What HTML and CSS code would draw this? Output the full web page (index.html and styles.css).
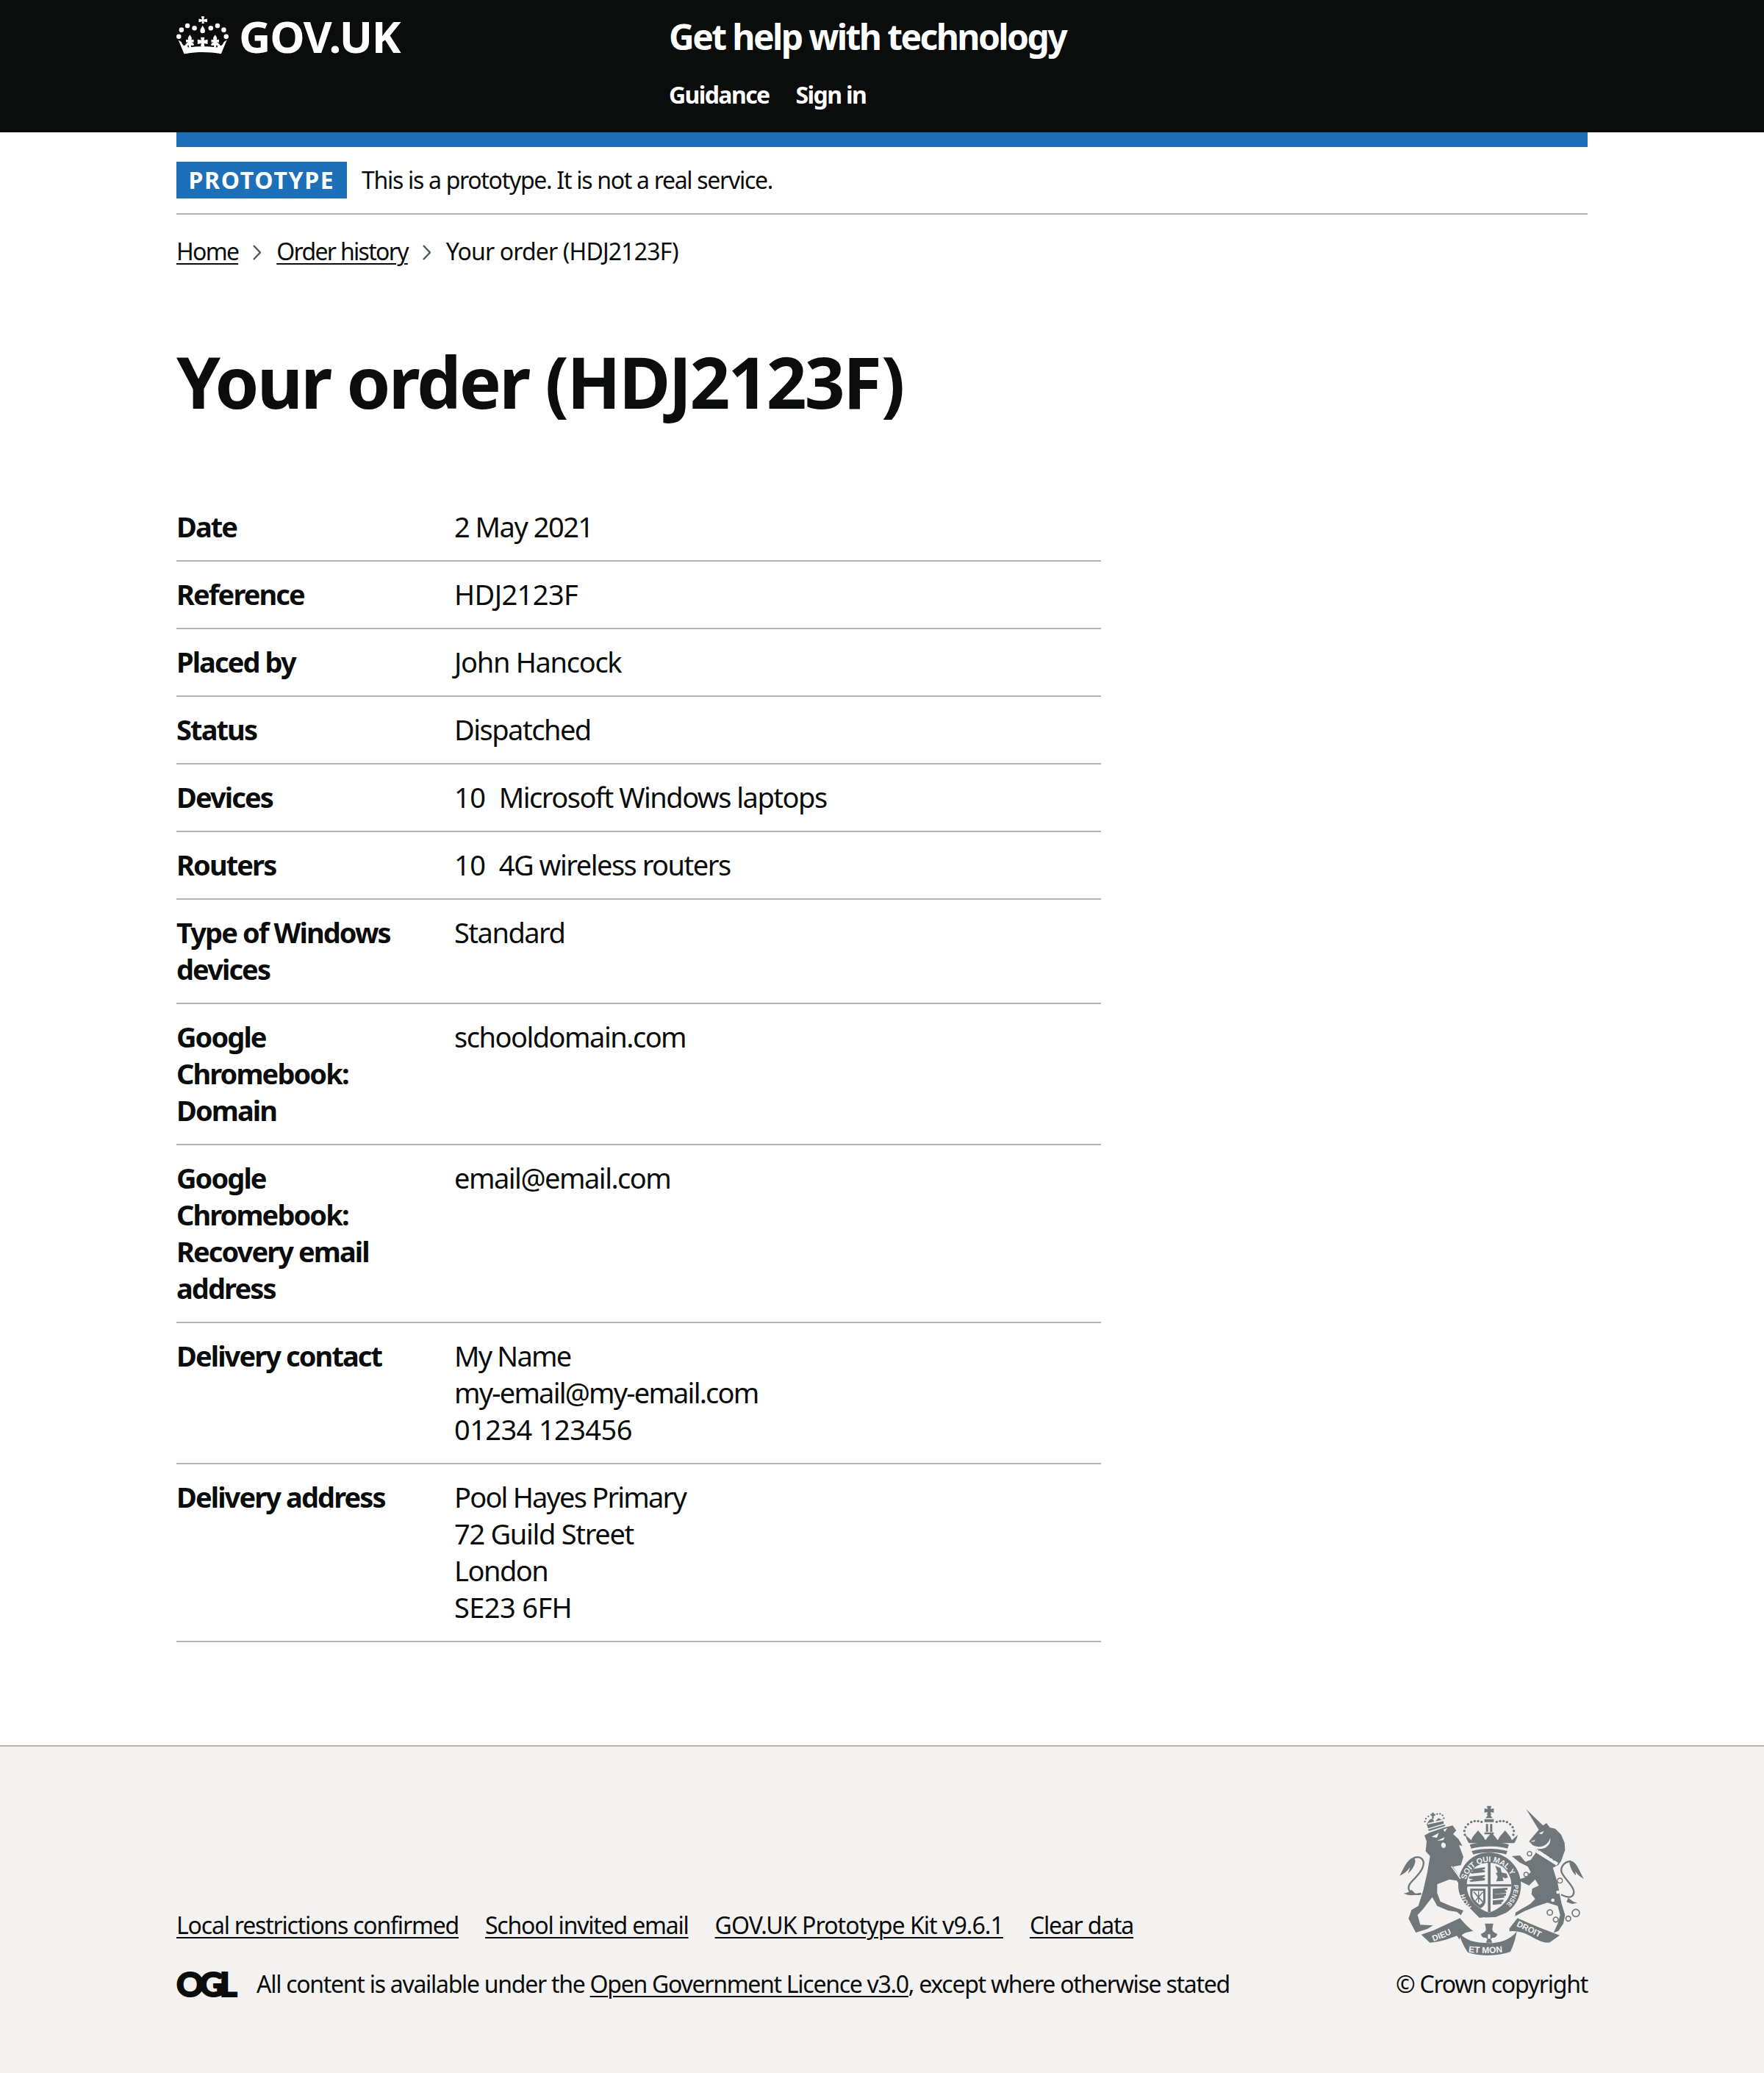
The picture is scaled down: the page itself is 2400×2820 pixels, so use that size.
FILE: index.html
```html
<!DOCTYPE html>
<html lang="en">
<head>
<meta charset="utf-8">
<title>Your order (HDJ2123F)</title>
<link rel="stylesheet" href="styles.css">
</head>
<body>
<header class="header">
  <div class="container header-inner">
    <a class="logo" href="#">
      <svg class="crown" viewBox="45 30 218 162" aria-hidden="true">
        <g fill="#fff">
          <circle cx="54" cy="118" r="10"/><circle cx="65" cy="90" r="10"/><circle cx="90" cy="73" r="10"/><circle cx="119" cy="83" r="10"/>
          <circle cx="187" cy="83" r="10"/><circle cx="215" cy="73" r="10"/><circle cx="241" cy="90" r="10"/><circle cx="251" cy="118" r="10"/>
          <path d="M147 34h13l-2 13 14-3v14l-14-3 2 9h-11l2-9-14 3V44l14 3z"/>
          <path d="M153 72c6 10 10 16 10 22a10 10 0 0 1-20 0c0-6 4-12 10-22z"/>
          <path d="M100 110c4 7 8 10 8 16 0 3-2 5-4 6l12-2v12l-10-2c3 2 9 4 12 13-5 3-9 3-13 1l-1 10h-8l-1-10c-4 2-8 2-13-1 3-9 9-11 12-13l-10 2v-12l12 2c-2-1-4-3-4-6 0-6 4-9 8-16z"/>
          <path d="M205 110c4 7 8 10 8 16 0 3-2 5-4 6l12-2v12l-10-2c3 2 9 4 12 13-5 3-9 3-13 1l-1 10h-8l-1-10c-4 2-8 2-13-1 3-9 9-11 12-13l-10 2v-12l12 2c-2-1-4-3-4-6 0-6 4-9 8-16z"/>
          <path d="M145 121h16l-2 12 15-3v19l-15-3 2 14h-16l2-14-15 3v-19l15 3z"/>
          <path d="M52 132l13 9c2 4 3 10 8 13 6 3 11 0 10-7 7 8 9 12 9 16 20-3 41-4 61-4s41 1 61 4c0-4 2-8 9-16-1 7 4 10 10 7 5-3 6-9 8-13l13-9-24 58c-25-5-51-7-77-7s-52 2-77 7z"/>
        </g>
      </svg>
      <span class="wordmark">GOV.UK</span>
    </a>
    <div class="service">
      <a class="service-name" href="#">Get help with technology</a>
      <nav class="nav">
        <a href="#">Guidance</a>
        <a href="#">Sign in</a>
      </nav>
    </div>
  </div>
</header>
<div class="container">
  <div class="blue-bar"></div>
  <div class="phase">
    <strong class="tag">PROTOTYPE</strong>
    <span>This is a prototype. It is not a real service.</span>
  </div>
  <nav class="crumbs">
    <a href="#">Home</a>
    <svg class="chev" viewBox="0 0 11 21"><path d="M1 1l9 9.5-9 9.5" fill="none" stroke="#505a5f" stroke-width="2.5"/></svg>
    <a href="#">Order history</a>
    <svg class="chev" viewBox="0 0 11 21"><path d="M1 1l9 9.5-9 9.5" fill="none" stroke="#505a5f" stroke-width="2.5"/></svg>
    <span class="crumb-current">Your order (HDJ2123F)</span>
  </nav>
  <main class="main">
    <h1 class="title">Your order (HDJ2123F)</h1>
    <dl class="summary">
      <div class="row"><dt>Date</dt><dd>2 May 2021</dd></div>
      <div class="row"><dt>Reference</dt><dd class="figures">HDJ2123F</dd></div>
      <div class="row"><dt>Placed by</dt><dd class="name">John Hancock</dd></div>
      <div class="row"><dt>Status</dt><dd>Dispatched</dd></div>
      <div class="row"><dt>Devices</dt><dd><span class="figures">10&nbsp; </span>Microsoft Windows laptops</dd></div>
      <div class="row"><dt>Routers</dt><dd><span class="figures">10&nbsp; </span>4G wireless routers</dd></div>
      <div class="row"><dt>Type of Windows devices</dt><dd>Standard</dd></div>
      <div class="row"><dt>Google Chromebook: Domain</dt><dd>schooldomain.com</dd></div>
      <div class="row"><dt>Google Chromebook: Recovery email address</dt><dd>email@email.com</dd></div>
      <div class="row"><dt>Delivery contact</dt><dd><span class="tight">My Name<br>my-email@my-email.com</span><br><span class="figures">01234 123456</span></dd></div>
      <div class="row"><dt>Delivery address</dt><dd><span class="tight">Pool Hayes Primary</span><br><span class="name">72 Guild Street</span><br>London<br><span class="figures">SE23 6FH</span></dd></div>
    </dl>
  </main>
</div>
<footer class="footer">
  <div class="container footer-inner">
    <div class="meta">
      <ul class="links">
        <li><a href="#">Local restrictions confirmed</a></li>
        <li><a href="#">School invited email</a></li>
        <li class="kit"><a href="#">GOV.UK Prototype Kit v9.6.1</a></li>
        <li><a href="#">Clear data</a></li>
      </ul>
      <div class="licence">
        <span class="ogl">OGL</span>
        <span>All content is available under the <a href="#">Open Government Licence v3.0</a>, except where otherwise stated</span>
      </div>
    </div>
    <div class="copyright">
      <svg class="crest" viewBox="130 108 752 612" aria-hidden="true">
        <defs>
          <path id="garter-top" d="M402 412A98 98 0 0 1 592 412"/>
          <path id="garter-right" d="M598 432A100 100 0 0 1 562 516"/>
          <path id="garter-left" d="M426 522A104 104 0 0 1 395 458"/>
          <path id="rib-left" d="M270 663Q320 645 372 617"/>
          <path id="rib-mid" d="M412 706Q498 718 582 702"/>
          <path id="rib-right" d="M607 600Q670 630 732 662"/>
        </defs>
        <g fill="#6f777b">
          <g transform="translate(120 90)">
            <path d="M113 140L135 128 195 108 228 100 243 120 230 135 252 155 268 183 254 180 272 228 262 262 230 268 262 318 275 335 292 345 280 365 262 350 245 325 215 320 165 340 165 375 178 410 220 428 272 447 262 466 245 452 210 447 165 428 145 392 108 440 85 465 96 505 148 508 125 522 78 537 48 480 60 445 88 428 108 365 125 290 136 225 118 205 122 165Z"/>
            <path d="M100 378C60 388 32 362 60 330 90 300 116 270 108 245 100 225 75 225 62 238" fill="none" stroke="#6f777b" stroke-width="7"/>
            <path d="M70 230C45 235 30 270 12 305 30 296 42 288 54 270 52 282 48 290 46 296 62 282 76 260 76 242Z"/>
            <path d="M60 362C50 372 40 376 28 376 40 384 60 388 80 382Z"/>
            <path d="M122 95L134 76 146 72 155 86 170 70 190 78 192 92 128 112Z"/>
            <path d="M127 116L196 96 198 102 132 122Z"/>
            <path d="M144 47h7v6l6-1v9l-6-1v12h-7V60l-6 1v-9l6 1z"/>
            <circle cx="115" cy="84" r="3.5"/><circle cx="119" cy="72" r="3.5"/><circle cx="129" cy="63" r="3.5"/><circle cx="165" cy="53" r="3.5"/><circle cx="177" cy="52" r="3.5"/><circle cx="187" cy="58" r="3.5"/><circle cx="192" cy="70" r="3.5"/>
          </g>
          <path d="M488 110h18l-3 13 13-3v18l-13-3 3 12h-18l3-12-13 3v-18l13 3z"/>
          <path d="M497 140l14 20h-28z"/>
          <path d="M478 164h38v12h-38zM484 184h9v32h-9zM501 184h9v32h-9zM478 218h38v8h-38z"/>
          <path d="M414 262c-8-14-12-24-14-34l24 22 6-14 22-26 22 26 8 14 10-14 15-16 15 16 10 14 8-14 22-26 22 26 6 14 24-22c-2 10-6 20-14 34z"/>
          <path d="M418 268c46-14 114-14 160 0l-6 16c-44-12-104-12-148 0z"/>
          <path d="M426 294c40-12 104-12 146 0l-6 14c-40-12-94-12-134 0z"/>
          <circle cx="398" cy="228" r="5"/><circle cx="396" cy="212" r="5"/><circle cx="401" cy="197" r="5"/><circle cx="411" cy="185" r="5"/><circle cx="424" cy="176" r="5"/><circle cx="438" cy="172" r="5"/><circle cx="452" cy="172" r="5"/><circle cx="466" cy="175" r="5"/>
          <circle cx="528" cy="175" r="5"/><circle cx="542" cy="172" r="5"/><circle cx="556" cy="172" r="5"/><circle cx="570" cy="176" r="5"/><circle cx="583" cy="185" r="5"/><circle cx="593" cy="197" r="5"/><circle cx="598" cy="212" r="5"/><circle cx="596" cy="228" r="5"/>
          <path fill-rule="evenodd" d="M497 300c72 0 130 60 130 134 0 48-24 88-60 112l-44 18-66 2-34-34c-32-24-52-60-52-98 0-74 54-134 126-134zm0 42c-53 0-91 38-91 92 0 56 43 96 91 111 48-15 91-55 91-111 0-54-38-92-91-92z"/>
          <path d="M492 340h11v204h-11zM406 430h182v9H406z"/>
          <path d="M424 368l56-8v8l-12 2 12 4v6l-54 6-8-6 14-4-10-4zM416 398l64-6v8l-12 2 12 4v8l-58 6-6-6 16-4-18-4z"/>
          <path d="M522 354l22 10 4 18 20 4 6 16-12 4-10-6 4 16-30 2 6-18-8-16 8-2z"/>
          <path d="M512 448l60-4v8l-12 2 8 6-2 6-54 4zM512 470l54-2v8l-10 2 6 6-50 6zM512 496l44-4-2 8-8 4 4 6-38 4z"/>
          <path fill-rule="evenodd" d="M420 448h62v50c0 16-12 26-20 30-18-10-42-30-42-56zm9 9v15c0 16 14 30 30 42 8-6 14-12 14-22v-35z"/>
          <path d="M432 462l4-3 36 40-3 4zM470 460l3 3-30 36-3-3zM452 458h4v46h-4z"/>
          <g transform="translate(495 90)">
            <path d="M153 33L222 100 236 90 250 108 272 113 296 137 310 170 312 200 304 222 296 245 284 262 262 272 282 335 290 380 298 420 312 465 305 500 285 530 265 538 282 500 292 465 282 428 240 415 195 430 145 450 108 470 110 455 135 440 170 420 190 400 175 380 178 358 205 345 190 320 165 345 118 322 148 312 172 290 160 268 125 250 95 225 128 222 150 248 172 240 190 215 200 190 180 180 165 165 185 140 205 118Z"/>
            <path d="M296 382C330 400 348 392 348 370 346 345 315 325 298 292 292 268 308 248 335 246" fill="none" stroke="#6f777b" stroke-width="7"/>
            <path d="M332 243C358 246 368 280 388 318 372 308 362 300 354 288 356 300 358 306 352 300 340 288 332 266 330 254Z"/>
            <path d="M325 395L345 410 362 416 340 420 318 412Z"/>
          </g>
          <g transform="translate(120 90)">
            <path d="M100 545L150 528 200 505 258 478C270 492 290 516 312 530L285 536C268 542 258 552 256 566L246 550C220 560 170 578 135 578Z"/>
          </g>
          <path d="M372 625C400 660 440 670 498 670 550 670 590 650 610 622 604 655 596 680 584 705 530 724 460 724 410 708 392 682 380 655 372 625Z"/>
          <g transform="translate(495 90)">
            <path d="M85 520L118 478C170 502 230 526 290 548L250 577C225 582 190 562 165 548 140 535 110 528 85 532Z"/>
          </g>
          <path d="M464 632c10-4 20-8 20-20l-4-22h34l-4 22c0 12 10 16 20 20 0 10-10 18-20 16l-6 6 6 14h-26l6-14-6-6c-10 2-20-6-20-16z"/>
        </g>
        <g fill="none" stroke="#6f777b" stroke-width="5">
          <circle cx="745" cy="545" r="11"/><circle cx="769" cy="574" r="10"/><circle cx="820" cy="570" r="10"/><circle cx="851" cy="547" r="15"/>
        </g>
        <g fill="#f3f2f1">
          <g transform="translate(120 90)">
            <path d="M142 146L172 130 164 150ZM190 116L207 110 196 126ZM164 162L196 148 190 160ZM184 172C195 164 206 180 197 190 186 197 177 182 184 172Z"/>
            <path d="M225 265L262 316 258 319 222 268Z"/>
            <path d="M125 96L128 90 190 76 192 82Z"/>
            <path d="M150 90l4-12 4 12zM176 84l4-10 4 10z"/>
          </g>
          <path d="M492 634h10v18h-10z"/>
          <g transform="translate(495 90)">
            <path d="M204 132L226 122 218 136ZM170 166L190 158 186 166ZM190 184C215 192 242 182 252 150 256 185 222 205 186 192Z"/>
            <circle cx="167" cy="215" r="9"/><circle cx="153" cy="300" r="9"/><circle cx="262" cy="405" r="7"/><circle cx="283" cy="372" r="7"/><circle cx="291" cy="325" r="10"/>
            <path d="M198 196L284 252 278 264 192 210Z"/>
          </g>
          <circle cx="475" cy="570" r="6"/><circle cx="508" cy="571" r="6"/>
        </g>
        <g fill="none" stroke="#6f777b" stroke-width="4" transform="translate(495 90)">
          <circle cx="167" cy="215" r="9"/><circle cx="153" cy="300" r="9"/><circle cx="291" cy="325" r="10"/>
          <path d="M202 204l10-8 4 10 8-4 2 12 8-4 4 12 10-2 2 12 10-2 4 12 8-2" stroke-width="3"/>
        </g>
        <g class="crest-text">
          <text font-size="32"><textPath href="#garter-top" textLength="240">SOIT QUI MAL Y</textPath></text>
          <text font-size="26"><textPath href="#garter-right">PENSE</textPath></text>
          <text font-size="28"><textPath href="#garter-left">HOH</textPath></text>
          <text font-size="34"><textPath href="#rib-left">DIEU</textPath></text>
          <text font-size="36"><textPath href="#rib-mid">ET MON</textPath></text>
          <text font-size="34"><textPath href="#rib-right">DROIT</textPath></text>
        </g>
      </svg>
      <a href="#">© Crown copyright</a>
    </div>
  </div>
</footer>
</body>
</html>
```
FILE: styles.css
```css
* { box-sizing: border-box; }
html, body { margin: 0; padding: 0; }
body {
  font-family: "Noto Sans", sans-serif;
  font-size: 38px;
  line-height: 50px;
  color: #0b0c0c;
  background: #fff;
  letter-spacing: -1.5px;
}
a { color: inherit; text-decoration: underline; text-decoration-thickness: 2px; text-underline-offset: 4px; }
.container { width: 1920px; margin: 0 auto; }

.header { background: #0b0c0c; color: #fff; height: 180px; }
.header a { text-decoration: none; }
.header-inner { display: flex; }
.logo { width: 670px; display: flex; align-items: flex-start; gap: 13px; padding-top: 21px; }
.crown { width: 72px; height: 53px; flex: none; }
.wordmark { font-size: 60px; line-height: 56px; font-weight: 700; letter-spacing: -1.3px; }
.service { display: flex; flex-direction: column; }
.service-name { font-size: 48px; line-height: 50px; font-weight: 700; padding-top: 25px; letter-spacing: -2.6px; }
.nav { display: flex; gap: 36px; font-size: 32px; line-height: 40px; font-weight: 700; margin-top: 34px; letter-spacing: -1.6px; }

.blue-bar { height: 20px; background: #1d70b8; }
.phase { display: flex; align-items: center; gap: 20px; padding: 20px 0; border-bottom: 2px solid #b1b4b6; font-size: 32px; line-height: 50px; letter-spacing: -1.3px; }
.tag { background: #1d70b8; color: #fff; width: 232px; height: 50px; text-align: center; font-size: 32px; font-weight: 700; letter-spacing: 1.7px; line-height: 50px; }

.crumbs { display: flex; align-items: center; margin-top: 30px; font-size: 32px; line-height: 40px; letter-spacing: -1.7px; }
.crumb-current { letter-spacing: -0.85px; }
.chev { width: 11px; height: 21px; margin: 2px 21px 0 20px; flex: none; }

.main { padding: 107px 0 140px; }
.title { margin: 0 0 103px; font-size: 96px; line-height: 100px; font-weight: 700; letter-spacing: -2.8px; }
.summary { width: 1258px; margin: 0; }
.row { display: flex; padding: 19px 0 21px; border-bottom: 2px solid #b1b4b6; }
.row dt { width: 378px; flex: none; padding-right: 40px; font-weight: 700; letter-spacing: -1.9px; }
.row dd { margin: 0; }
.figures { letter-spacing: -0.6px; }
.name { letter-spacing: -1.3px; }
.tight { letter-spacing: -1.8px; }

.footer { background: #f3f2f1; border-top: 2px solid #b1b4b6; padding: 80px 0 101px; font-size: 32px; line-height: 40px; letter-spacing: -1.2px; }
.footer-inner { display: flex; justify-content: space-between; align-items: flex-end; }
.links { list-style: none; margin: 0 0 40px; padding: 0; display: flex; gap: 36px; }
.kit { letter-spacing: -0.93px; }
.licence { display: flex; gap: 27px; letter-spacing: -1.28px; }
.ogl { font-family: Lato, sans-serif; font-weight: 900; font-size: 46px; letter-spacing: -6px; -webkit-text-stroke: 2px #0b0c0c; width: 82px; flex: none; }
.copyright { display: flex; flex-direction: column; align-items: center; letter-spacing: -1.25px; }
.copyright a { text-decoration: none; white-space: nowrap; margin-top: 19px; }
.crest { width: 252px; height: 204px; display: block; }
.crest-text text { font-family: "Liberation Sans", sans-serif; font-weight: 700; fill: #f3f2f1; letter-spacing: 0; }
```
